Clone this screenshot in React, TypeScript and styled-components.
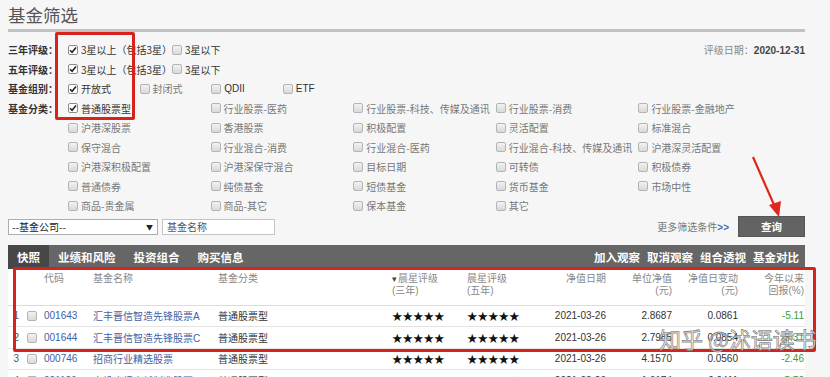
import React from "react";
import styled, { createGlobalStyle } from "styled-components";

const GlobalStyle = createGlobalStyle`
  html, body {
    margin: 0;
    padding: 0;
    background: #f6f6f6;
    overflow: hidden;
  }
  body {
    font-family: "Liberation Sans", "Noto Sans CJK SC", sans-serif;
    color: #333;
  }
`;

const ratingOptions = [
  { label: "3星以上（包括3星）", on: true },
  { label: "3星以下", on: false },
];

const groupOptions = [
  { label: "开放式", on: true },
  { label: "封闭式", on: false },
  { label: "QDII", on: false, latin: true },
  { label: "ETF", on: false, latin: true },
];

const categoryRows = [
  ["普通股票型", "行业股票-医药", "行业股票-科技、传媒及通讯", "行业股票-消费", "行业股票-金融地产"],
  ["沪港深股票", "香港股票", "积极配置", "灵活配置", "标准混合"],
  ["保守混合", "行业混合-消费", "行业混合-医药", "行业混合-科技、传媒及通讯", "沪港深灵活配置"],
  ["沪港深积极配置", "沪港深保守混合", "目标日期", "可转债", "积极债券"],
  ["普通债券", "纯债基金", "短债基金", "货币基金", "市场中性"],
  ["商品-贵金属", "商品-其它", "保本基金", "其它"],
];

const funds = [
  { no: 1, code: "001643", name: "汇丰晋信智造先锋股票A", type: "普通股票型", s3: 5, s5: 5, date: "2021-03-26", nav: "2.8687", chg: "0.0861", ytd: "-5.11" },
  { no: 2, code: "001644", name: "汇丰晋信智造先锋股票C", type: "普通股票型", s3: 5, s5: 5, date: "2021-03-26", nav: "2.7985", chg: "0.0854", ytd: "-5.31" },
  { no: 3, code: "000746", name: "招商行业精选股票", type: "普通股票型", s3: 5, s5: 5, date: "2021-03-26", nav: "4.1570", chg: "0.0560", ytd: "-2.46" },
  { no: 4, code: "001126", name: "上投摩根卓越制造股票", type: "普通股票型", s3: 5, s5: 4, date: "2021-03-26", nav: "1.6174", chg: "0.0411", ytd: "5.72" },
];

const Check = ({ on }: { on?: boolean }) => (
  <Box $on={on}>
    {on && (
      <svg width="8" height="8" viewBox="0 0 8 8">
        <path d="M1 4.2 L3.1 6.3 L7 1.6" fill="none" stroke="#222" strokeWidth="1.6" />
      </svg>
    )}
  </Box>
);

const Stars = ({ n }: { n: number }) => (
  <StarText>
    {"★".repeat(n)}
    {n < 5 && <EmptyStar>{"☆".repeat(5 - n)}</EmptyStar>}
  </StarText>
);

const App = () => {
  return (
    <>
      <GlobalStyle />
      <Page>
        <Title>基金筛选</Title>
        <TitleRule />

        <Filters>
          <FilterRow>
            <RowLabel>三年评级：</RowLabel>
            <Options $cols="104px 100px">
              {ratingOptions.map((o) => (
                <Option key={o.label} $on>
                  <Check on={o.on} />
                  {o.label}
                </Option>
              ))}
            </Options>
            <RateDate>
              评级日期：<b>2020-12-31</b>
            </RateDate>
          </FilterRow>
          <FilterRow>
            <RowLabel>五年评级：</RowLabel>
            <Options $cols="104px 100px">
              {ratingOptions.map((o) => (
                <Option key={o.label} $on>
                  <Check on={o.on} />
                  {o.label}
                </Option>
              ))}
            </Options>
          </FilterRow>
          <FilterRow>
            <RowLabel>基金组别：</RowLabel>
            <Options $cols="repeat(4, 71.6px)">
              {groupOptions.map((o) => (
                <Option key={o.label} $on={o.on || o.latin} $latin={o.latin}>
                  <Check on={o.on} />
                  {o.label}
                </Option>
              ))}
            </Options>
          </FilterRow>
          {categoryRows.map((row, i) => (
            <FilterRow key={i}>
              <RowLabel>{i === 0 ? "基金分类：" : ""}</RowLabel>
              <Options $cols="repeat(5, 142.6px)">
                {row.map((c) => (
                  <Option key={c} $on={c === "普通股票型"}>
                    <Check on={c === "普通股票型"} />
                    {c}
                  </Option>
                ))}
              </Options>
            </FilterRow>
          ))}
        </Filters>

        <SearchRow>
          <CompanySelect>
            <span>--基金公司--</span>
            <SelectArrow>▼</SelectArrow>
          </CompanySelect>
          <NameInput>基金名称</NameInput>
          <MoreLink>
            更多筛选条件<b>&gt;&gt;</b>
          </MoreLink>
          <QueryButton>查询</QueryButton>
        </SearchRow>

        <TabBar>
          <Tab $active>快照</Tab>
          <Tab>业绩和风险</Tab>
          <Tab>投资组合</Tab>
          <Tab>购买信息</Tab>
          <Actions>
            <Action>加入观察</Action>
            <Action>取消观察</Action>
            <Action>组合透视</Action>
            <Action>基金对比</Action>
          </Actions>
        </TabBar>

        <Table>
          <HeadRow>
            <Cell />
            <Cell />
            <Cell $pl={4}>代码</Cell>
            <Cell $pl={4}>基金名称</Cell>
            <Cell $pl={4}>基金分类</Cell>
            <Cell $pl={6}>
              <SortMark>▾</SortMark>晨星评级
              <br />
              (三年)
            </Cell>
            <Cell $pl={6}>
              晨星评级
              <br />
              (五年)
            </Cell>
            <Cell $right>净值日期</Cell>
            <Cell $right>
              单位净值
              <br />
              (元)
            </Cell>
            <Cell $right>
              净值日变动
              <br />
              (元)
            </Cell>
            <Cell $right $pr={1}>
              今年以来
              <br />
              回报(%)
            </Cell>
          </HeadRow>
          {funds.map((f) => (
            <BodyRow key={f.code}>
              <IndexCell>{f.no}</IndexCell>
              <Cell>
                <Check />
              </Cell>
              <LinkCell $pl={4}>{f.code}</LinkCell>
              <LinkCell $pl={4}>{f.name}</LinkCell>
              <Cell $pl={4}>{f.type}</Cell>
              <Cell $pl={6}>
                <Stars n={f.s3} />
              </Cell>
              <Cell $pl={6}>
                <Stars n={f.s5} />
              </Cell>
              <Cell $right>{f.date}</Cell>
              <Cell $right>{f.nav}</Cell>
              <Cell $right>{f.chg}</Cell>
              <ReturnCell $right $pr={1}>
                {f.ytd}
              </ReturnCell>
            </BodyRow>
          ))}
        </Table>

        <RedFrame $x={55} $y={32} $w={80} $h={88} />
        <RedFrame $x={13} $y={267} $w={803} $h={85} />
        <ArrowMark width="40" height="70" viewBox="0 0 40 70">
          <path d="M4 2 L26 52" stroke="#e0261d" strokeWidth="2.2" fill="none" />
          <path d="M20 50 L32 46 L30 62 Z" fill="#e0261d" />
        </ArrowMark>
        <Watermark>知乎 @沭语读书</Watermark>
      </Page>
    </>
  );
};

export default App;

const Page = styled.div`
  position: relative;
  width: 830px;
  height: 377px;
  padding: 0 25px 0 8px;
  box-sizing: border-box;
`;

const Title = styled.div`
  height: 29px;
  line-height: 30px;
  font-size: 17.5px;
  color: #555;
  font-family: "Noto Sans CJK SC", sans-serif;
`;

const TitleRule = styled.div`
  height: 3px;
  background: #c2c2c2;
`;

const Filters = styled.div`
  margin-top: 8px;
`;

const FilterRow = styled.div`
  display: flex;
  align-items: center;
  height: 19.5px;
`;

const RowLabel = styled.div`
  width: 60px;
  flex: none;
  font-size: 10px;
  font-weight: bold;
  color: #333;
  font-family: "Noto Sans CJK SC", sans-serif;
  white-space: nowrap;
`;

const Options = styled.div<{ $cols: string }>`
  display: grid;
  grid-template-columns: ${({ $cols }) => $cols};
  align-items: center;
`;

const Option = styled.label<{ $on?: boolean; $latin?: boolean }>`
  display: flex;
  align-items: center;
  gap: 3px;
  font-size: 10px;
  white-space: nowrap;
  color: ${({ $on }) => ($on ? "#333" : "#777")};
  font-family: ${({ $latin }) =>
    $latin ? '"Liberation Sans", sans-serif' : '"Noto Sans CJK SC", sans-serif'};
`;

const Box = styled.span<{ $on?: boolean }>`
  display: inline-flex;
  align-items: center;
  justify-content: center;
  flex: none;
  width: 10px;
  height: 10px;
  box-sizing: border-box;
  border: 1px solid ${({ $on }) => ($on ? "#8c8c8c" : "#b4b4b4")};
  border-radius: 2px;
  background: ${({ $on }) => ($on ? "#fff" : "linear-gradient(#f2f2f2, #d9d9d9)")};
`;

const RateDate = styled.div`
  margin-left: auto;
  font-size: 10px;
  color: #888;
  font-family: "Noto Sans CJK SC", sans-serif;

  b {
    font-family: "Liberation Sans", sans-serif;
    color: #444;
  }
`;

const SearchRow = styled.div`
  display: flex;
  align-items: center;
  height: 22px;
`;

const CompanySelect = styled.div`
  display: flex;
  align-items: center;
  justify-content: space-between;
  width: 150px;
  height: 16px;
  box-sizing: border-box;
  padding: 0 4px 0 3px;
  background: #fff;
  border: 1px solid #adadad;
  font-size: 10px;
  color: #222;
  font-family: "Noto Sans CJK SC", sans-serif;
`;

const SelectArrow = styled.span`
  font-size: 7px;
  color: #222;
`;

const NameInput = styled.div`
  width: 113px;
  height: 16px;
  margin-left: 4px;
  box-sizing: border-box;
  padding-left: 4px;
  line-height: 14px;
  background: #fff;
  border: 1px solid #c4c4c4;
  font-size: 10px;
  color: #555;
  font-family: "Noto Sans CJK SC", sans-serif;
`;

const MoreLink = styled.span`
  margin-left: auto;
  margin-right: 9px;
  font-size: 10px;
  color: #777;
  font-family: "Noto Sans CJK SC", sans-serif;

  b {
    color: #4a6aa5;
    font-family: "Liberation Sans", sans-serif;
  }
`;

const QueryButton = styled.div`
  display: flex;
  align-items: center;
  justify-content: center;
  width: 67px;
  height: 21px;
  background: #636363;
  border: 1px solid #555;
  box-sizing: border-box;
  color: #fff;
  font-size: 10.5px;
  font-weight: bold;
  font-family: "Noto Sans CJK SC", sans-serif;
`;

const TabBar = styled.div`
  display: flex;
  align-items: stretch;
  height: 24px;
  margin-top: 7px;
  background: #666;
  font-family: "Noto Sans CJK SC", sans-serif;
`;

const Tab = styled.div<{ $active?: boolean }>`
  display: flex;
  align-items: center;
  padding: 0 9px;
  font-size: 11.5px;
  font-weight: bold;
  color: #fff;
  background: ${({ $active }) => ($active ? "#474747" : "transparent")};
`;

const Actions = styled.div`
  display: flex;
  align-items: center;
  gap: 7px;
  margin-left: auto;
  padding-right: 6px;
`;

const Action = styled.span`
  font-size: 11.5px;
  font-weight: bold;
  color: #fff;
`;

const Table = styled.div`
  background: #fff;
  font-size: 10px;
`;

const columns = "14px 18px 49px 125px 172px 75px 84px 64px 66px 66px 64px";

const HeadRow = styled.div`
  display: grid;
  grid-template-columns: ${columns};
  height: 37px;
  padding-top: 4px;
  box-sizing: border-box;
  border-bottom: 1px solid #dcdcdc;
  color: #888;
  line-height: 12px;
`;

const BodyRow = styled.div`
  display: grid;
  grid-template-columns: ${columns};
  align-items: center;
  height: 20.5px;
  border-bottom: 1px solid #e4e4e4;
  color: #333;
`;

const Cell = styled.div<{ $right?: boolean; $pl?: number; $pr?: number }>`
  display: block;
  white-space: nowrap;
  text-align: ${({ $right }) => ($right ? "right" : "left")};
  padding-left: ${({ $pl }) => $pl ?? 0}px;
  padding-right: ${({ $right, $pr }) => ($right ? $pr ?? 3 : 0)}px;
  font-family: "Liberation Sans", "Noto Sans CJK SC", sans-serif;

  ${Box} {
    margin-left: 5px;
    vertical-align: middle;
  }
`;

const IndexCell = styled.div`
  text-align: right;
  padding-right: 3px;
  color: #555;
`;

const LinkCell = styled(Cell)`
  color: #3f62a3;
`;

const ReturnCell = styled(Cell)`
  color: #3c9a3c;
`;

const SortMark = styled.span`
  font-size: 9px;
  color: #444;
  margin-right: 1px;
`;

const StarText = styled.span`
  font-family: "Noto Sans CJK SC", sans-serif;
  font-size: 10.5px;
  color: #111;
`;

const EmptyStar = styled.span`
  color: #bbb;
`;

const RedFrame = styled.div<{ $x: number; $y: number; $w: number; $h: number }>`
  position: absolute;
  left: ${({ $x }) => $x}px;
  top: ${({ $y }) => $y}px;
  width: ${({ $w }) => $w}px;
  height: ${({ $h }) => $h}px;
  box-sizing: border-box;
  border: 3px solid #d8231c;
  border-radius: 2px;
  pointer-events: none;
`;

const ArrowMark = styled.svg`
  position: absolute;
  left: 749px;
  top: 155px;
`;

const Watermark = styled.div`
  position: absolute;
  left: 659px;
  top: 322px;
  font-size: 22px;
  font-family: "Noto Sans CJK SC", sans-serif;
  color: rgba(255, 255, 255, 0.85);
  -webkit-text-stroke: 0.8px rgba(85, 85, 85, 0.7);
  white-space: nowrap;
  pointer-events: none;
`;
